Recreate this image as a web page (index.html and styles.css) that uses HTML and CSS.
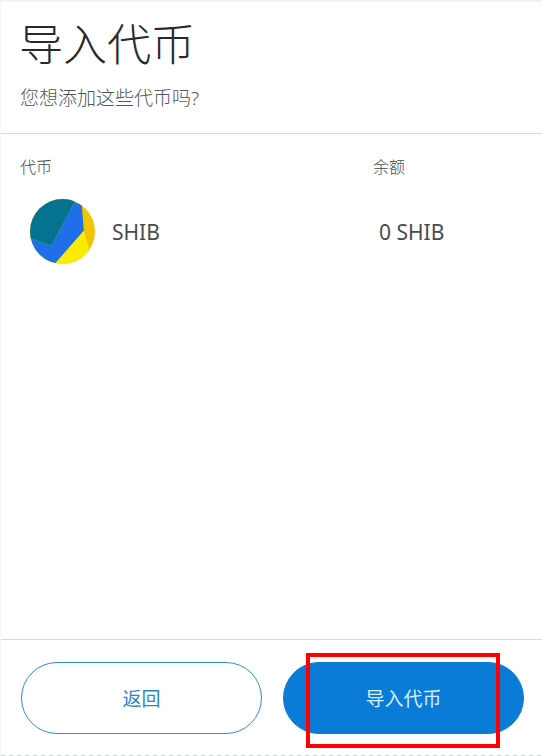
FILE: index.html
```html
<!DOCTYPE html>
<html lang="zh-CN">
<head>
<meta charset="utf-8">
<title>导入代币</title>
<link rel="stylesheet" href="styles.css">
</head>
<body>
<div class="page">
  <header class="head">
    <h1 class="title">导入代币</h1>
    <p class="subtitle">您想添加这些代币吗?</p>
  </header>
  <main class="content">
    <div class="grid labels">
      <span>代币</span>
      <span>余额</span>
    </div>
    <div class="grid row">
      <div class="token">
        <svg class="logo" viewBox="0 0 64 64" aria-hidden="true">
          <rect width="64" height="64" fill="#f2c504"/>
          <polygon points="53,31 58,49 52,70 18,70 25,63" fill="#f8ec06"/>
          <polygon points="44,3 51,6 53,31 25,63 20,70 -5,70 -5,37 21,46" fill="#1f70e8"/>
          <polygon points="-5,37 21,46 44,3 44,-5 -5,-5" fill="#03738f"/>
        </svg>
        <span class="name">SHIB</span>
      </div>
      <span class="balance">0 SHIB</span>
    </div>
  </main>
  <footer class="foot">
    <button class="btn ghost" type="button">返回</button>
    <div class="primary-wrap">
      <button class="btn primary" type="button">导入代币</button>
      <span class="mark"></span>
    </div>
  </footer>
  <div class="dashes"></div>
</div>
</body>
</html>
```
FILE: styles.css
```css
* { box-sizing: border-box; }
html, body { margin: 0; height: 100%; background: #fff; }
body {
  font-family: "Noto Sans", "Noto Sans CJK SC", sans-serif;
  color: #3b4046;
  overflow: hidden;
}
.page {
  width: 542px;
  height: 756px;
  display: flex;
  flex-direction: column;
  border-top: 2px solid #f1f2f3;
  border-left: 1px solid #f6f6f6;
}
.head {
  height: 132px;
  padding: 17px 20px 0 18px;
  border-bottom: 1px solid #d8dadc;
  flex: none;
}
.title {
  margin: 0;
  font-size: 44px;
  line-height: 50px;
  font-weight: 300;
  color: #26292d;
}
.subtitle {
  margin: 16px 0 0 1px;
  font-size: 19px;
  line-height: 26px;
  font-weight: 300;
  color: #4f555b;
}
.content {
  flex: 1;
  padding: 22px 20px 0 19px;
}
.grid {
  display: grid;
  grid-template-columns: 353px 1fr;
}
.labels {
  font-size: 16px;
  line-height: 22px;
  font-weight: 300;
  color: #43484e;
}
.row {
  margin-top: 21px;
  align-items: center;
}
.token {
  display: flex;
  align-items: center;
  gap: 16px;
  padding-left: 10px;
}
.logo {
  width: 65px;
  height: 65px;
  border-radius: 50%;
  display: block;
}
.name, .balance {
  font-size: 21px;
  line-height: 28px;
  font-weight: 400;
  color: #474c51;
}
.name { margin-left: 1px; }
.balance { padding-left: 6px; }
.foot {
  flex: none;
  height: 116px;
  border-top: 1px solid #d8dadc;
  padding: 22px 17px 0 20px;
  display: grid;
  grid-template-columns: 241px 241px;
  column-gap: 21px;
  align-content: start;
}
.btn {
  width: 241px;
  height: 72px;
  border-radius: 36px;
  font: inherit;
  font-size: 19px;
  padding: 0;
}
.ghost {
  background: #fff;
  border: 1px solid #2f8ccf;
  color: #2a86c8;
}
.primary {
  background: #0a7bd6;
  border: 1px solid #0a7bd6;
  color: #d7effa;
}
.primary-wrap { position: relative; }
.mark {
  position: absolute;
  left: 23px;
  top: -9px;
  width: 194px;
  height: 95px;
  border: 4px solid #ff0000;
}
.dashes {
  flex: none;
  height: 1px;
  margin-top: auto;
  background: repeating-linear-gradient(90deg, #b9dfe0 0 4px, #fff 4px 8px);
}
```
